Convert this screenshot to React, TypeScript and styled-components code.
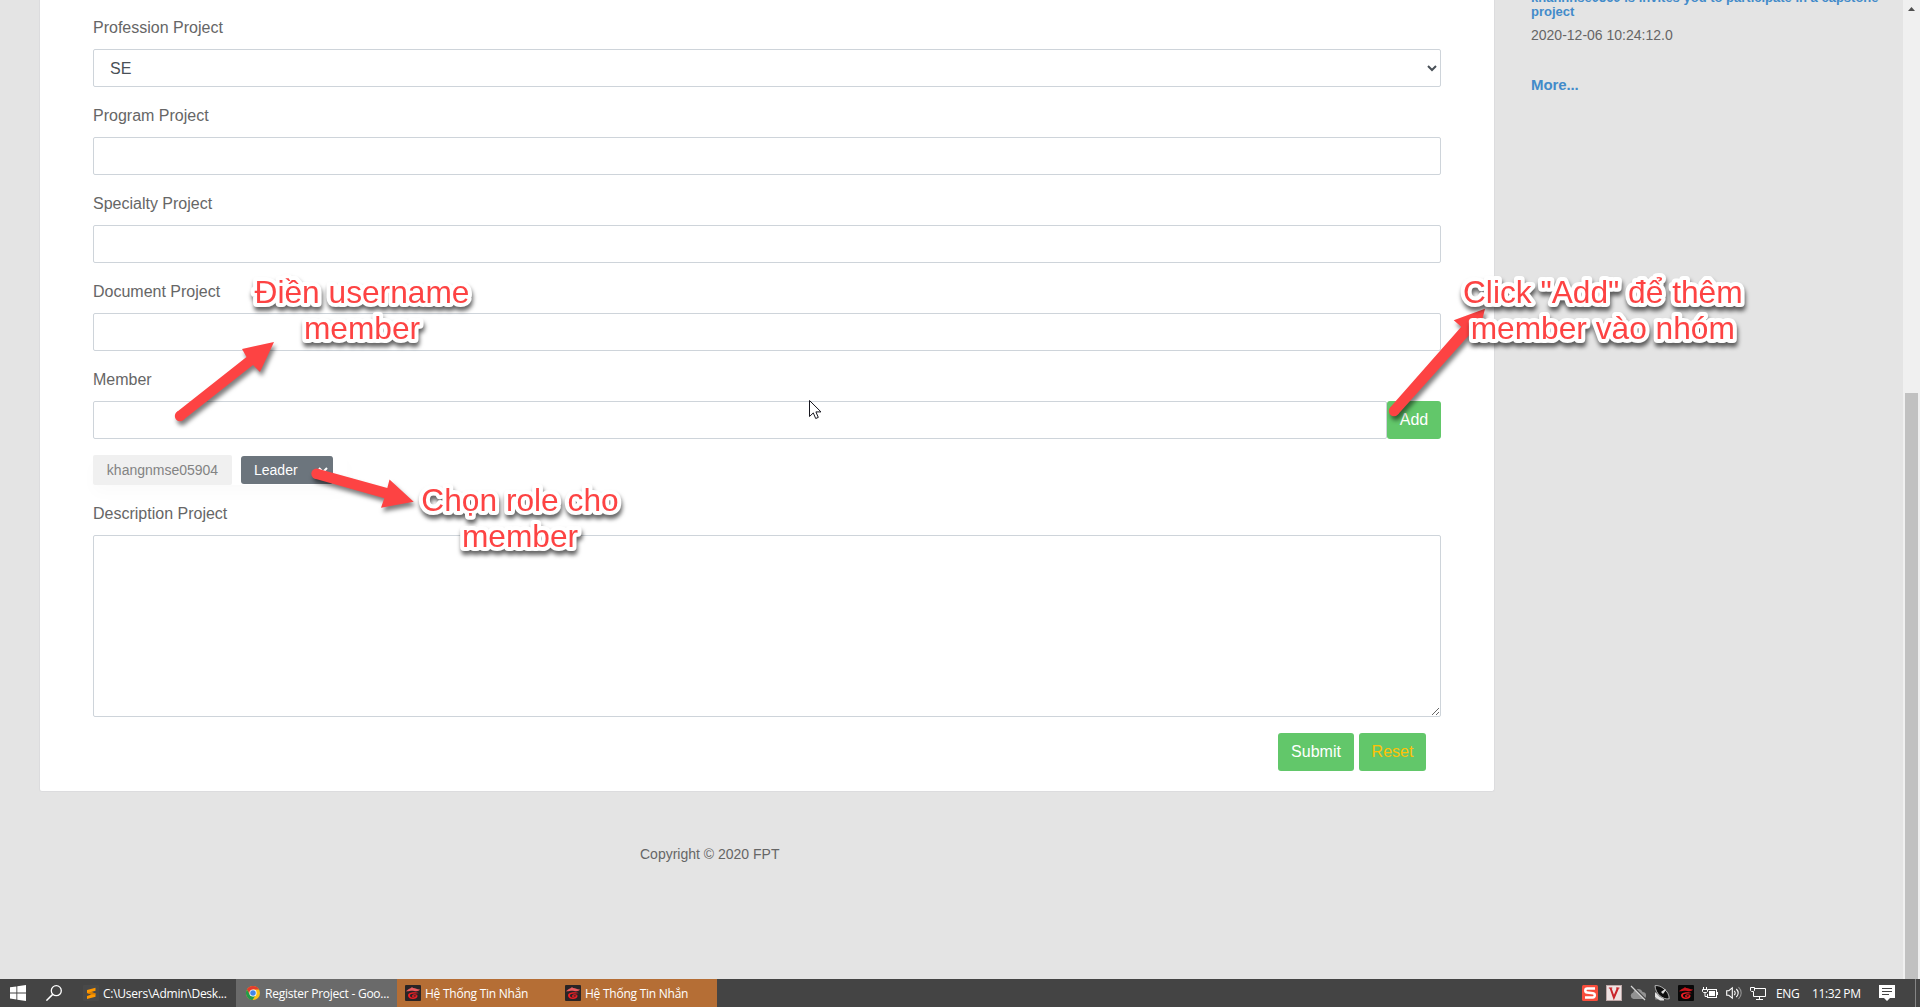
import React from "react";
import styled, { createGlobalStyle } from "styled-components";

const Global = createGlobalStyle`
  *, *::before, *::after { box-sizing: border-box; }
  html, body { margin: 0; padding: 0; overflow: hidden; }
  body { background: #e4e4e4; font-family: "Liberation Sans", Arial, sans-serif; color: #666; font-size: 16px; line-height: 24px; }
`;

const Screen = styled.div`
  position: relative;
  width: 1920px;
  height: 1007px;
  overflow: hidden;
  display: flex;
  flex-direction: column;
`;
const Browser = styled.div`
  flex: 1;
  min-height: 0;
  display: flex;
`;
const Main = styled.main`
  width: 1495px;
  padding-left: 39px;
`;
const Card = styled.form`
  height: 792px;
  background: #fff;
  border: 1px solid #dcdcde;
  border-top: 0;
  border-radius: 0 0 3px 3px;
  padding: 16px 53px 0;
`;
const Group = styled.div`
  margin-bottom: 17px;
`;
const Label = styled.label`
  display: block;
  margin-bottom: 9px;
`;
const control = `
  display: block;
  width: 100%;
  height: 38px;
  padding: 6px 12px;
  border: 1px solid #ced4da;
  border-radius: 2px;
  background: #fff;
  color: #495057;
  font: 16px/24px "Liberation Sans", Arial, sans-serif;
  outline: 0;
`;
const Input = styled.input`${control}`;
const Select = styled.select`${control}`;
const TextArea = styled.textarea`
  ${control}
  height: 182px;
  resize: vertical;
`;
const InputRow = styled.div`
  display: flex;
`;
const Button = styled.button<{ $width: number; $color?: string }>`
  flex: none;
  width: ${(p) => p.$width}px;
  height: 38px;
  padding: 0;
  border: 0;
  border-radius: 3px;
  background: #62c76a;
  color: ${(p) => p.$color || "#fff"};
  font: 16px/24px "Liberation Sans", Arial, sans-serif;
`;
const MemberRow = styled.div`
  display: flex;
  align-items: center;
  gap: 9px;
  width: 254px;
  height: 30px;
  margin: -1px 0 17px;
  box-shadow: 0 8px 16px rgba(0, 0, 0, 0.02);
`;
const UserTag = styled.span`
  width: 139px;
  height: 30px;
  border-radius: 2px;
  background: #f0f0f0;
  color: #838383;
  font-size: 14px;
  line-height: 30px;
  text-align: center;
`;
const RoleSelect = styled.select`
  width: 92px;
  height: 28px;
  padding: 2px 2px 2px 9px;
  border: 0;
  border-right: 2px solid #6c757d;
  border-radius: 3px;
  background: #6c757d;
  color: #fff;
  font: 14px/21px "Liberation Sans", Arial, sans-serif;
`;
const Actions = styled.div`
  display: flex;
  justify-content: flex-end;
  gap: 5px;
  margin-top: -1px;
  padding-right: 15px;
`;
const Footer = styled.footer`
  margin-top: 50px;
  padding-left: 601px;
  font-size: 14px;
`;
const Sidebar = styled.aside`
  flex: 1;
  padding-left: 36px;
  margin-top: -9px;
`;
const NoticeTitle = styled.div`
  width: 360px;
  color: #428bca;
  font-weight: bold;
  font-size: 13px;
  line-height: 14px;
`;
const NoticeDate = styled.div`
  margin-top: 4px;
  font-size: 14px;
`;
const More = styled.div`
  margin-top: 26px;
  color: #428bca;
  font-weight: bold;
  font-size: 15px;
  letter-spacing: -0.1px;
`;
const Scrollbar = styled.div`
  width: 17px;
  padding: 0 2px;
  background: #f0f0f0;
  display: flex;
  flex-direction: column;
  justify-content: space-between;
  align-items: center;
`;
const ScrollUp = styled.svg`
  margin-top: 7px;
  width: 7px;
  height: 4px;
`;
const Thumb = styled.div`
  width: 13px;
  height: 586px;
  background: #c1c1c1;
`;

const Taskbar = styled.div`
  flex: none;
  height: 28px;
  display: flex;
  align-items: center;
  background: #444;
  color: #fff;
  font: 12px/28px "Open Sans", "Noto Sans", sans-serif;
`;
const IconSlot = styled.span<{ $before: number }>`
  flex: none;
  display: flex;
  width: 16px;
  margin-left: ${(p) => p.$before}px;
`;
const Task = styled.div<{ $width: number; $bg?: string; $pad: number }>`
  flex: none;
  display: flex;
  align-items: center;
  gap: 4px;
  width: ${(p) => p.$width}px;
  height: 28px;
  padding-left: ${(p) => p.$pad}px;
  background: ${(p) => p.$bg || "transparent"};
  letter-spacing: -0.25px;
  white-space: nowrap;
`;
const TaskTitle = styled.span`
  padding-top: 1px;
`;
const Tray = styled.div`
  display: flex;
  align-items: center;
  gap: 8px;
  margin-left: auto;
`;
const TrayText = styled.span<{ $width: number; $before: number; $spacing: number }>`
  width: ${(p) => p.$width}px;
  margin-left: ${(p) => p.$before}px;
  padding-top: 1px;
  letter-spacing: ${(p) => p.$spacing}px;
  white-space: nowrap;
`;
const DesktopEdge = styled.span`
  width: 5px;
  height: 28px;
  margin-left: 12px;
  border-left: 1px solid #858585;
`;

const Overlay = styled.svg`
  position: absolute;
  left: 0;
  top: 0;
  pointer-events: none;
`;
const ArrowShape = styled.g`
  filter: drop-shadow(2px 4px 2px rgba(0, 0, 0, 0.5));
`;
const NoteText = styled.text`
  fill: #fd4343;
  stroke: #fff;
  stroke-width: 8px;
  stroke-linejoin: round;
  paint-order: stroke fill;
  font-family: "Liberation Sans", Arial, sans-serif;
  font-size: 31.7px;
  text-anchor: middle;
  filter: drop-shadow(1px 4px 2px rgba(0, 0, 0, 0.6));
`;

const Icon = ({ children }: { children: React.ReactNode }) => (
  <svg width="16" height="16" viewBox="0 0 16 16" fill="none">{children}</svg>
);
const WindowsIcon = () => (
  <Icon><path fill="#fff" d="M0 2.3 6.4 1.4V7.5H0ZM7.3 1.2 16 0V7.5H7.3ZM0 8.4H6.4V14.5L0 13.6ZM7.3 8.4H16V16L7.3 14.7Z" /></Icon>
);
const SearchIcon = () => (
  <Icon><circle cx="10.3" cy="5.7" r="5" stroke="#fff" strokeWidth="1.3" /><path stroke="#fff" strokeWidth="1.5" d="M6.7 9.4.4 15.6" /></Icon>
);
const SublimeIcon = () => (
  <Icon>
    <rect width="16" height="16" rx="1" fill="#494949" />
    <path fill="#ff9800" d="M12.5 2.7v3L8 7.1l4.5 1.4v3.2L4 14v-3l4.4-1.4L4 8.1V5Z" />
    <path fill="#d67c00" d="m4 8.1 4-1 4.5 1.4v1L8.4 9.6Z" />
  </Icon>
);
const ChromeIcon = () => (
  <Icon>
    <circle cx="8" cy="8" r="7" fill="#fbc116" />
    <path fill="#e33b2e" d="M1.9 4.5A7 7 0 0 1 14.1 4.6H8L5 9.6Z" />
    <path fill="#229a4b" d="M1.9 4.5 5 9.7 8 11.4l2.1-.3L7.5 15A7 7 0 0 1 1.9 4.5Z" />
    <circle cx="8" cy="8" r="3.6" fill="#fff" /><circle cx="8" cy="8" r="2.8" fill="#4285e8" />
  </Icon>
);
const GarenaIcon = ({ dark }: { dark?: boolean }) => (
  <Icon>
    <rect width="16" height="16" rx="1" fill={dark ? "#080808" : "#2a2425"} />
    <path fill={dark ? "#c9161c" : "#e95d60"} d="M.8 6.2C2.5 5.6 3.5 3.6 6 3l1-1 1 1c2.6-.2 4 1.7 7 1.5C13.8 6.4 11.5 6.4 9 5.9 6 5.2 4 6.6.8 6.2Z" />
    <path fill="#ef1e25" d="M13.8 8.2C11 6.6 3 6.6 3 10.4c0 4.6 9.4 4.8 9.6.3l-1.7-.2c-.4 2.8-5.9 2.7-5.9 0C5 8.3 9 8.4 13.8 8.2Z" />
    <path stroke="#ef1e25" strokeWidth="1.1" d="M12.3 10.4c-1.5-.8-4-.9-4.6.4-.2.8.7 1.2 1.7.8" />
  </Icon>
);
const SIcon = () => (
  <Icon><rect width="16" height="16" rx="1.5" fill="#f84d3c" /><path stroke="#fff" strokeWidth="2.5" d="M13 3.6H5.2C2.7 3.6 2.7 7.3 5 7.6l6 .7c2.4.4 2.4 4.1-.3 4.1H3" /></Icon>
);
const VIcon = () => (
  <Icon><rect x=".5" y=".5" width="15" height="15" fill="#eee2e2" stroke="#bda7a7" /><path stroke="#c9242b" strokeWidth="2" d="m4.5 3 3.4 9.5L12 3" /><path stroke="#c9242b" d="M2.8 3h3.5M10 3h3.5" /></Icon>
);
const CloudOffIcon = () => (
  <Icon><path fill="#929292" d="M3.5 14A3.4 3.4 0 0 1 3.2 7.4 5 5 0 0 1 12.6 7 3.5 3.5 0 0 1 12.5 14Z" /><path stroke="#444" strokeWidth="2" d="m2.6 1.4 13 13" /><path stroke="#d4d4d4" strokeWidth="1.2" d="m1 1 14 14" /></Icon>
);
const DishIcon = () => (
  <Icon>
    <path fill="#8e8e8e" d="M2 7.5 5.4 10v4.5H1.2Z" /><path fill="#e3e3e3" d="m1 7 4 4.2L10 14v1.5H6L1 12Z" />
    <path fill="#101010" stroke="#d5d5d5" strokeWidth=".8" d="M1 .7C6-.6 15.5 6 15.2 13.8 9 15 1.5 9 1 .7Z" />
    <path fill="#ddd" d="m7 7 4-3 1 1-3 4Z" />
  </Icon>
);
const BatteryIcon = () => (
  <Icon><rect x="5.5" y="4.5" width="9" height="8" stroke="#fff" /><path fill="#fff" d="M7 6h6v5H7zM15 7h1v3h-1z" /><path fill="#444" d="M0 2h6v7H0z" /><path stroke="#fff" d="M1.5 2v3M4.5 2v3M.5 4.5h5v2l-1 1h-3l-1-1v-2M3 8v3.5h2.5" /></Icon>
);
const SpeakerIcon = () => (
  <Icon><path stroke="#fff" strokeWidth="1.1" d="M.7 5.7h2.1L6.3 2.8v10.4L2.8 10.3H.7ZM8.2 5.8c1.3 1.2 1.3 3.2 0 4.4M10.3 4c2.5 2.3 2.5 5.7 0 8" /><path stroke="#949494" strokeWidth="1.1" d="M12.5 2.1c3.6 3.4 3.6 8.4 0 11.8" /></Icon>
);
const NetworkIcon = () => (
  <Icon><path stroke="#fff" d="M5 3.5h10.5v8H3.5V7M9.5 11.5v3M6 14.5h7" /><path stroke="#fff" d="M.5 2.5h4v3l-1 1h-2l-1-1Z" /></Icon>
);
const NoticeIcon = () => (
  <Icon><path fill="#fff" d="M0 0h16v13h-5l-3 3-3-3H0Z" /><path stroke="#444" d="M3 3.5h10M3 6.5h10M3 9.5h7" /></Icon>
);

function Arrow({ tail, body }: { tail: [number, number]; body: string }) {
  return (
    <ArrowShape fill="#fd4343">
      <circle cx={tail[0]} cy={tail[1]} r="5.2" />
      <path d={body} />
    </ArrowShape>
  );
}

function Note({ x, y, lines }: { x: number; y: number; lines: string[] }) {
  return (
    <NoteText>
      {lines.map((line, i) => (
        <tspan key={line} x={x} y={y + i * 36}>{line}</tspan>
      ))}
    </NoteText>
  );
}

export default function App() {
  return (
    <Screen>
      <Global />
      <Browser>
        <Main>
          <Card>
            <Group>
              <Label>Profession Project</Label>
              <Select defaultValue="SE"><option>SE</option></Select>
            </Group>
            {["Program Project", "Specialty Project", "Document Project"].map((name) => (
              <Group key={name}>
                <Label>{name}</Label>
                <Input />
              </Group>
            ))}
            <Group>
              <Label>Member</Label>
              <InputRow>
                <Input />
                <Button type="button" $width={54}>Add</Button>
              </InputRow>
            </Group>
            <MemberRow>
              <UserTag>khangnmse05904</UserTag>
              <RoleSelect defaultValue="Leader"><option>Leader</option></RoleSelect>
            </MemberRow>
            <Group>
              <Label>Description Project</Label>
              <TextArea />
            </Group>
            <Actions>
              <Button type="button" $width={76}>Submit</Button>
              <Button type="button" $width={67} $color="#ffc107">Reset</Button>
            </Actions>
          </Card>
          <Footer>Copyright © 2020 FPT</Footer>
        </Main>
        <Sidebar>
          <NoticeTitle>khanhnse0560 is invites you to participate in a capstone project</NoticeTitle>
          <NoticeDate>2020-12-06 10:24:12.0</NoticeDate>
          <More>More...</More>
        </Sidebar>
        <Scrollbar>
          <ScrollUp viewBox="0 0 7 4"><path d="M3.5 0 7 4H0Z" fill="#505050" /></ScrollUp>
          <Thumb />
        </Scrollbar>
      </Browser>

      <Taskbar>
        <IconSlot $before={10}><WindowsIcon /></IconSlot>
        <IconSlot $before={20}><SearchIcon /></IconSlot>
        <Task $width={174} $pad={21}><SublimeIcon /><TaskTitle>C:\Users\Admin\Desk...</TaskTitle></Task>
        <Task $width={161} $pad={9} $bg="#6a6a6a"><ChromeIcon /><TaskTitle>Register Project - Goo...</TaskTitle></Task>
        <Task $width={160} $pad={8} $bg="#b56e35"><GarenaIcon /><TaskTitle>Hệ Thống Tin Nhắn</TaskTitle></Task>
        <Task $width={160} $pad={8} $bg="#b56e35"><GarenaIcon /><TaskTitle>Hệ Thống Tin Nhắn</TaskTitle></Task>
        <Tray>
          <SIcon /><VIcon /><CloudOffIcon /><DishIcon /><GarenaIcon dark />
          <BatteryIcon /><SpeakerIcon /><NetworkIcon />
          <TrayText $width={24} $before={2} $spacing={-0.4}>ENG</TrayText>
          <TrayText $width={48} $before={4} $spacing={-0.4}>11:32 PM</TrayText>
          <IconSlot $before={11}><NoticeIcon /></IconSlot>
          <DesktopEdge />
        </Tray>
      </Taskbar>

      <Overlay width="1920" height="1007">
        <Arrow tail={[180, 416]} body="M176.8 411.9 246.5 357 242 349 274 342 260 372 253 365 183.2 420.1Z" />
        <Arrow tail={[316.5, 473.8]} body="M317.8 468.8 387.3 488 389.5 479.5 413.7 501.7 381 507.8 384.3 498.2 315.1 478.8Z" />
        <Arrow tail={[1394, 411]} body="M1390.1 407.5 1461.3 326.7 1453.7 320.3 1485 308.7 1477.1 341.1 1469.9 334.3 1397.9 414.5Z" />
        <path d="M809.5 400.5v16l3.8-3.6 2.4 5.6 2.6-1.1-2.4-5.5h5.1Z" fill="#fff" stroke="#16161e" />
        <Note x={362} y={302.5} lines={["Điền username", "member"]} />
        <Note x={1602.8} y={302.5} lines={['Click "Add" để thêm', "member vào nhóm"]} />
        <Note x={520} y={510.5} lines={["Chọn role cho", "member"]} />
      </Overlay>
    </Screen>
  );
}
